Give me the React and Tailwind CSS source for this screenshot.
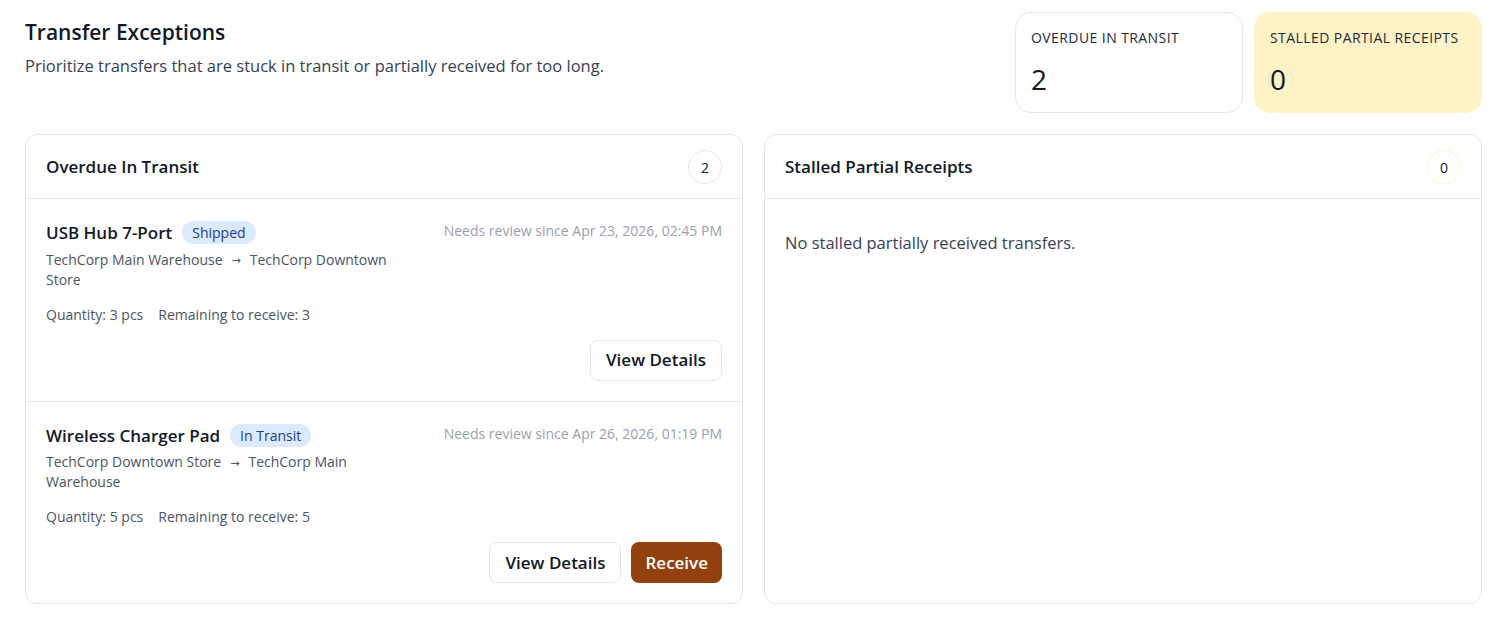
import React from 'react'

const transfers = [
    {
        id: 1,
        product: "USB Hub 7-Port",
        status: "Shipped",
        from: "TechCorp Main Warehouse",
        to: "TechCorp Downtown Store",
        since: "Apr 23, 2026, 02:45 PM",
        quantity: 3,
        remaining: 3,
        canReceive: false,
    },
    {
        id: 2,
        product: "Wireless Charger Pad",
        status: "In Transit",
        from: "TechCorp Downtown Store",
        to: "TechCorp Main Warehouse",
        since: "Apr 26, 2026, 01:19 PM",
        quantity: 5,
        remaining: 5,
        canReceive: true,
    },
];

const StatCard = ({label, value, tone}) => {
    return (
        <div className={`flex h-[101px] w-[228px] flex-col rounded-2xl px-[15px] pt-[14px] ${tone === "warn" ? "bg-[#fef3c7] border border-[#fef3c7]" : "bg-white border border-gray-200"}`}>
            <span className='whitespace-nowrap text-[14px] uppercase tracking-[0.03em] text-gray-800'>{label}</span>
            <span className='mt-[17px] text-[28px] font-medium leading-none text-gray-900'>{value}</span>
        </div>
    )
}

const TransferRow = ({item, last}) => {
    return (
        <div className={`px-5 pt-[21px] pb-5 ${last ? "" : "border-b border-gray-200"}`}>
            <div className='flex items-start justify-between'>
                <div className='w-[360px]'>
                    <div className='flex items-center gap-[10px]'>
                        <span className='text-[17px] font-semibold text-gray-900'>{item.product}</span>
                        <span className='rounded-full bg-[#dbeafe] px-[10px] py-[1px] text-[14px] text-[#1e3a8a]'>{item.status}</span>
                    </div>
                    <p className='mt-[4px] text-[14px] leading-[20px] text-gray-600'>
                        {item.from}
                        {/* route arrow */}
                        <span className="mx-[9px] inline-block align-middle font-['DejaVu_Sans',sans-serif] text-[11px] leading-none">→</span>
                        {item.to}
                    </p>
                    <p className='mt-[14px] text-[14px] text-gray-600'>
                        Quantity: {item.quantity} pcs<span className='ml-[15px]'>Remaining to receive: {item.remaining}</span>
                    </p>
                </div>
                <span className='text-[14px] text-gray-400'>Needs review since {item.since}</span>
            </div>
            <div className='mt-[15px] flex justify-end gap-[10px]'>
                <button className='h-[41px] rounded-lg border border-gray-200 bg-white px-[15px] text-[17px] font-semibold text-gray-900'>
                    View Details
                </button>
                {
                    item.canReceive && (
                        <button className='h-[41px] rounded-lg bg-[#92400e] px-[14px] text-[17px] font-semibold text-white'>
                            Receive
                        </button>
                    )
                }
            </div>
        </div>
    )
}

const Panel = ({title, count, countTone, children}) => {
    return (
        <div className='flex flex-col rounded-xl border border-gray-200 bg-white'>
            <div className='flex h-[64px] items-center justify-between border-b border-gray-200 px-5 pt-[1px]'>
                <h2 className='text-[17px] font-semibold text-gray-900'>{title}</h2>
                <span className={`flex h-[34px] w-[34px] items-center justify-center rounded-full border text-[14px] text-gray-900 ${countTone === "warn" ? "border-[#fef3c7]" : "border-gray-200"}`}>
                    {count}
                </span>
            </div>
            {children}
        </div>
    )
}

export default function App() {
  return (
    <div className="min-h-screen bg-white pl-[25px] pr-[23px] pt-3 pb-4 font-['Open_Sans',sans-serif]">
        <div className='flex items-start justify-between'>
            <div className='pt-[5px]'>
                <h1 className='text-[21px] font-semibold text-gray-900'>Transfer Exceptions</h1>
                <p className='mt-[5px] text-[16.5px] text-gray-700'>Prioritize transfers that are stuck in transit or partially received for too long.</p>
            </div>
            <div className='flex gap-[11px]'>
                <StatCard label="Overdue in Transit" value={2} />
                <StatCard label="Stalled Partial Receipts" value={0} tone="warn" />
            </div>
        </div>

        <div className='mt-[21px] grid grid-cols-2 gap-[21px]'>
            <Panel title="Overdue In Transit" count={transfers.length}>
                {
                    transfers.map((item, i) => (
                        <TransferRow key={item.id} item={item} last={i === transfers.length - 1} />
                    ))
                }
            </Panel>

            <Panel title="Stalled Partial Receipts" count={0} countTone="warn">
                <p className='px-5 pt-[32px] text-[16.5px] text-gray-700'>No stalled partially received transfers.</p>
            </Panel>
        </div>
    </div>
  )
}
